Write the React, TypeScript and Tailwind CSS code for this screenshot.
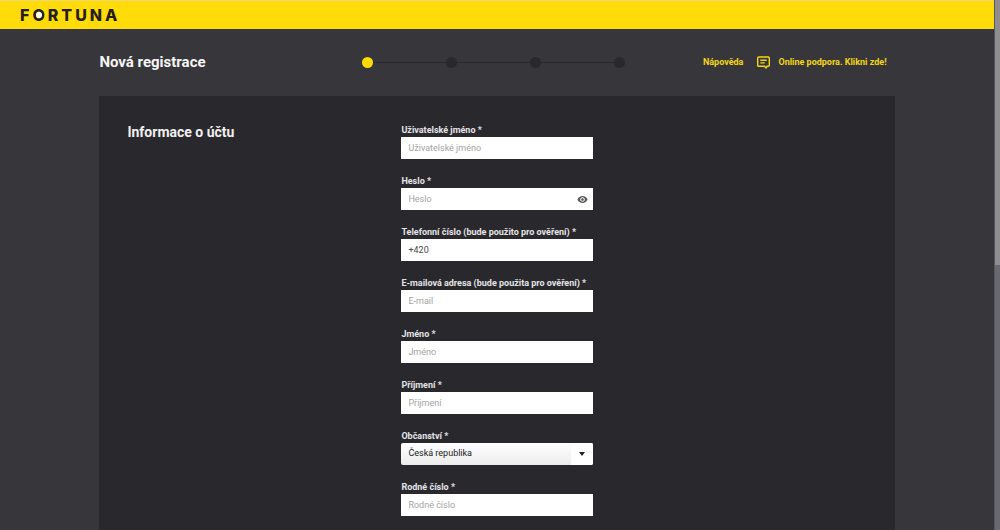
import React, { useState } from 'react';

interface Field {
    id: string;
    label: string;
    type: string;
    placeholder: string;
}

interface FormData {
    [key: string]: string;
}

const accountFields: Field[] = [
    { id: 'username', label: 'Uživatelské jméno *', type: 'text', placeholder: 'Uživatelské jméno' },
    { id: 'password', label: 'Heslo *', type: 'password', placeholder: 'Heslo' },
    { id: 'phone', label: 'Telefonní číslo (bude použito pro ověření) *', type: 'tel', placeholder: '' },
    { id: 'email', label: 'E-mailová adresa (bude použita pro ověření) *', type: 'email', placeholder: 'E-mail' },
    { id: 'firstName', label: 'Jméno *', type: 'text', placeholder: 'Jméno' },
    { id: 'lastName', label: 'Příjmení *', type: 'text', placeholder: 'Příjmení' },
];

const steps = [1, 2, 3, 4];

const inputClass =
    'block w-full h-[22px] px-[7px] bg-white text-[9px] text-[#4a4a4a] placeholder:text-[#a3a3a3] placeholder:opacity-100 outline-none';
const labelClass = 'block text-[9px] leading-[13px] font-bold text-[#e4e4e6]';

const Logo: React.FC = () => (
    <a href="#" className="flex font-['Inter',sans-serif] text-base leading-none font-extrabold tracking-[3px] text-[#241f10]">
        F
        <span className="relative">
            O
            <span className="absolute top-[5px] left-[4px] size-[6px] rounded-full bg-white" />
        </span>
        RTUNA
    </a>
);

const Stepper: React.FC = () => (
    <ol className="flex items-center">
        {steps.map((step) => (
            <li key={step} className="flex items-center">
                {step > 1 && <span className="w-[73px] h-px bg-[#29282d]" />}
                <span className={`size-[11px] rounded-full ${step === 1 ? 'bg-[#ffdb01]' : 'bg-[#29282d]'}`} />
            </li>
        ))}
    </ol>
);

const ChatIcon: React.FC = () => (
    <svg viewBox="0 0 13 13" className="size-[13px]" fill="none" stroke="#f3d616" strokeWidth="1.4">
        <path d="M1.7 1h9.600a1 1 0 0 1 1 1v7.300a1 1 0 0 1-1 1h-1.300L9 12 7.600 10.300H1.700a1 1 0 0 1-1-1V2a1 1 0 0 1 1-1z" />
        <path d="M3.300 4.300h6.400M3.300 6.900h4.500" />
    </svg>
);

const EyeIcon: React.FC = () => (
    <svg viewBox="0 0 24 24" className="size-[11px]" fill="#5c5c5c">
        <path d="M12 4.500C7 4.500 2.730 7.610 1 12c1.730 4.390 6 7.500 11 7.500s9.270-3.110 11-7.500c-1.730-4.390-6-7.500-11-7.500zM12 17c-2.760 0-5-2.240-5-5s2.240-5 5-5 5 2.240 5 5-2.240 5-5 5zm0-8c-1.660 0-3 1.340-3 3s1.340 3 3 3 3-1.340 3-3-1.340-3-3-3z" />
    </svg>
);

const App: React.FC = () => {
    const [formData, setFormData] = useState<FormData>({
        username: '',
        password: '',
        phone: '+420',
        email: '',
        firstName: '',
        lastName: '',
        citizenship: 'cz',
        birthNumber: '',
    });
    const [showPassword, setShowPassword] = useState(false);

    const handleChange = (e: React.ChangeEvent<HTMLInputElement | HTMLSelectElement>): void => {
        const { name, value } = e.target;
        setFormData((prev) => ({ ...prev, [name]: value }));
    };

    return (
        <div className="flex h-screen bg-[#37363b] font-['Roboto',sans-serif]">
            <div className="flex flex-1 flex-col overflow-y-auto [scrollbar-width:none]">
                {/* Top bar */}
                <header className="flex h-[29px] shrink-0 items-center border-t border-[#e9d873] bg-[#ffdb0a] px-5">
                    <Logo />
                </header>

                <div className="mx-auto flex w-4/5 flex-1 flex-col">
                    <div className="grid h-[67px] grid-cols-[263px_auto_1fr] items-center">
                        <h1 className="text-[15px] font-bold text-[#f5f5f5]">Nová registrace</h1>
                        <Stepper />
                        <nav className="flex items-center justify-end gap-[14px] pr-2 text-[9px] font-bold text-[#f3d616]">
                            <a href="#">Nápověda</a>
                            <a href="#" className="flex items-center gap-2">
                                <ChatIcon />
                                Online podpora. Klikni zde!
                            </a>
                        </nav>
                    </div>

                    <main className="grid flex-1 grid-cols-[274px_192px] content-start bg-[#29282d] px-7 pt-7 pb-4">
                        <h2 className="text-sm leading-4 font-bold text-[#f0f0f0]">Informace o účtu</h2>

                        <form className="flex flex-col gap-4">
                            {accountFields.map((field) => (
                                <div key={field.id}>
                                    <label htmlFor={field.id} className={labelClass}>{field.label}</label>
                                    <div className="relative">
                                        <input
                                            type={field.id === 'password' && showPassword ? 'text' : field.type}
                                            id={field.id}
                                            name={field.id}
                                            value={formData[field.id]}
                                            onChange={handleChange}
                                            placeholder={field.placeholder}
                                            className={inputClass}
                                        />
                                        {field.id === 'password' && (
                                            <button
                                                type="button"
                                                aria-label="Zobrazit heslo"
                                                onClick={() => setShowPassword(!showPassword)}
                                                className="absolute inset-y-0 right-[5px] flex items-center"
                                            >
                                                <EyeIcon />
                                            </button>
                                        )}
                                    </div>
                                </div>
                            ))}

                            <div>
                                <label htmlFor="citizenship" className={labelClass}>Občanství *</label>
                                <div className="relative">
                                    <select
                                        id="citizenship"
                                        name="citizenship"
                                        value={formData.citizenship}
                                        onChange={handleChange}
                                        className="block h-[22px] w-full appearance-none rounded-xs bg-linear-to-b from-white to-[#ececec] px-[7px] text-[9px] text-[#222222] outline-none"
                                    >
                                        <option value="cz">Česká republika</option>
                                        <option value="sk">Slovensko</option>
                                    </select>
                                    <span className="pointer-events-none absolute inset-y-0 right-0 flex w-[22px] items-center justify-center rounded-r-xs bg-white">
                                        <svg viewBox="0 0 6 4" className="h-1 w-[6px]" fill="#222222">
                                            <path d="M0 0h6L3 4z" />
                                        </svg>
                                    </span>
                                </div>
                            </div>

                            <div>
                                <label htmlFor="birthNumber" className={labelClass}>Rodné číslo *</label>
                                <input
                                    type="text"
                                    id="birthNumber"
                                    name="birthNumber"
                                    value={formData.birthNumber}
                                    onChange={handleChange}
                                    placeholder="Rodné číslo"
                                    className={inputClass}
                                />
                            </div>
                        </form>
                    </main>
                </div>
            </div>

            {/* Scroll track */}
            <div className="w-[6px] border-l border-[#57565f] bg-[#696973]">
                <div className="h-1/2 bg-[#8e8e8e]" />
            </div>
        </div>
    );
};

export default App;
